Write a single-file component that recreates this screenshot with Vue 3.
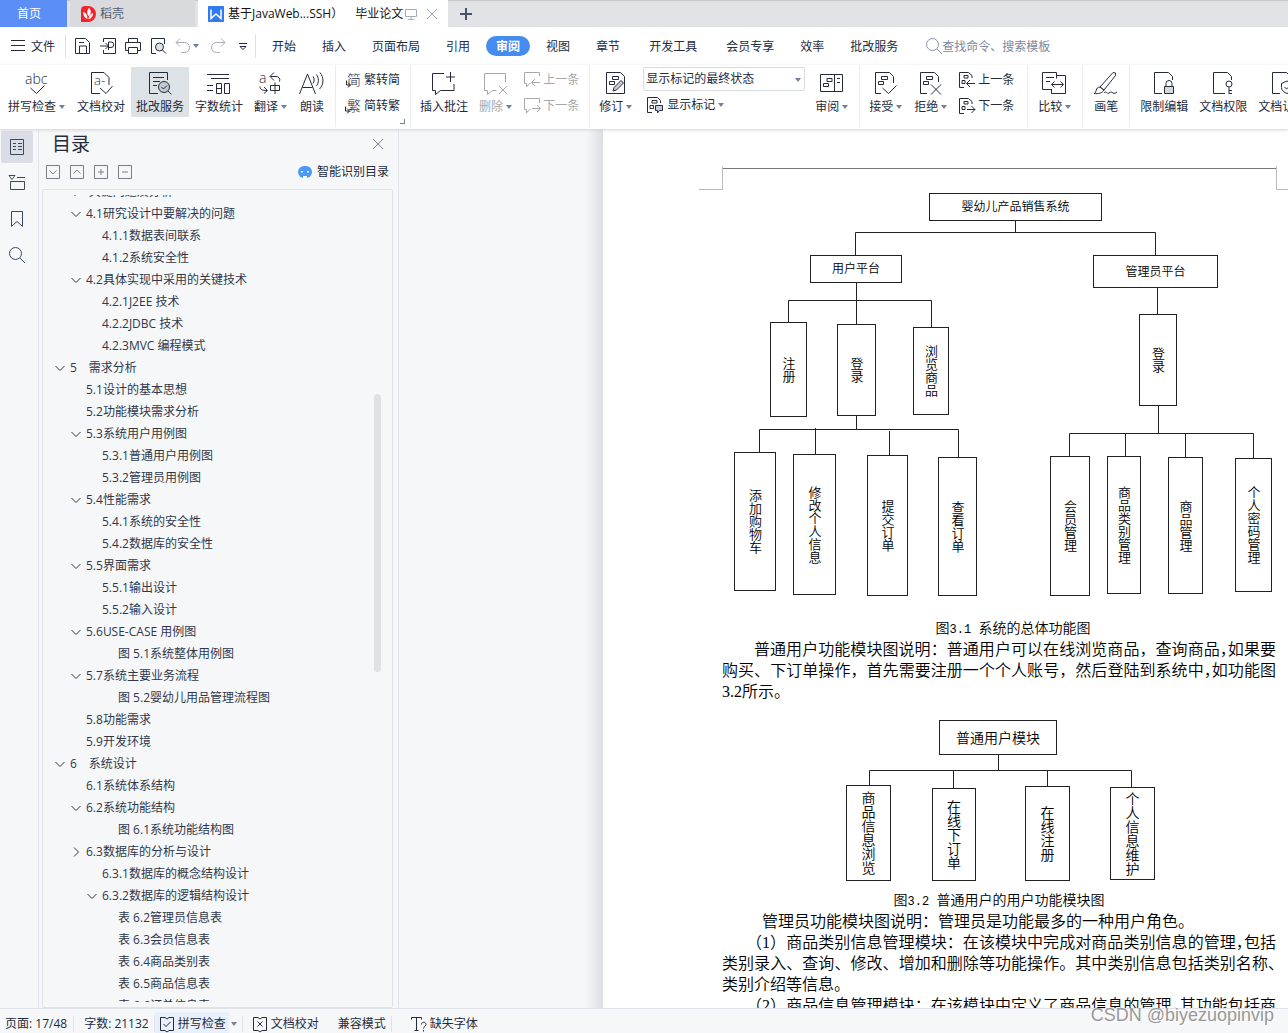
<script setup>
import { ref } from 'vue'

const icons = {
  menu: '<path d="M4 6.5h14M4 11.5h14M4 16.5h14"/>',
  save: '<path d="M4.5 19.5v-15h10l4 4v11zM8.5 19v-7h7v7M8 8.5h5"/>',
  pdf: '<path d="M7.5 8V4.5h12v15h-12V16M4 12h8M9.500 9l3 3-3 3M12.500 16V8h2.500a2.500 2.500 0 0 1 0 5.500h-2.500"/>',
  print: '<path d="M7.500 8.500v-4h9v4M7.500 16.500h-3v-8h15v8h-3M7.500 13.500h9v6h-9z"/>',
  preview: '<path d="M10 19.500H5.500v-15h13V10"/><circle cx="13.500" cy="13" r="4" fill="#dfe3e8"/><path d="M16.500 16l3.500 3.500"/>',
  undo: '<path d="M9 4.500l-4 4 4 4M5 8.500h8.500a5 5 0 0 1 0 10H10"/>',
  redo: '<path d="M15 4.500l4 4-4 4M19 8.500h-8.500a5 5 0 0 0 0 10H14"/>',
  more: '<path d="M8 9.500h8M9 12.500l3 3 3-3z"/>',
  search: '<circle cx="10.500" cy="10.500" r="6"/><path d="M15 15l5 5"/>',
  spell: '<text x="1" y="13" font-size="14">abc</text><path d="M6.500 17l6 5.500 8-8"/>',
  proof: '<path d="M12 22.500H3.500v-21H16l5 5V14M12 17l6 5.500 6.500-7.500"/><text x="6" y="14" font-size="13">a-</text>',
  service: '<path d="M11 22.500H2.500v-21h18V9M6 6.500h11M6 10.500h7M6 14.500h4"/><circle cx="17" cy="16" r="5.500" fill="#c3cad2"/><path d="M14.500 16l2 2 3.500-3.500M21 20l3.500 3.500"/>',
  count: '<path d="M1 3.500h22M5 7.500h18M1 14.500h6M1 19.500h6M10.500 12.500h5v10h-5zM10.500 17.500h5M18.500 12.500h5v10h-5z"/>',
  translate: '<text x="1" y="12" font-size="14">a</text><path d="M16 1.500l-4 4 4 4M12.500 5.500H18a3.500 3.500 0 0 1 3.500 5M2 15.500c0 3 2 4 7 4M6 16l3.500 3.500-3.500 3M12.500 14.500h9v5h-9zM17 11.500v11.500"/>',
  read: '<path d="M.5 23L8.500 3l8 20M3.500 16.500h10M14 5.500c1.500 2 1.500 5 0 7M17.500 3.500c2.500 3.500 2.500 8 0 11.500M21 1.500c4 5 4 12-.5 16.500"/>',
  simp: '<text x="6" y="17" font-size="14">简</text><path d="M5.500 12.500v4.500h4M7 14.500l2.500 2.500L7 19.500"/>',
  trad: '<text x="6" y="17" font-size="14">繁</text><path d="M4.500 12.500v4.500h3.500M6 14.500l2.500 2.500L6 19.500"/>',
  comment: '<path d="M13 2.500H1.500v17h3v4l5-4h13.500V13M19.500 1v10M15 6h9"/>',
  commentDel: '<path d="M22.500 11V2.500h-21v17h3v4l5-4h4M16 15l8 8M24 15l-8 8"/>',
  commentPrev: '<path d="M19.500 8V4.500h-15v11h2V19l3-3.500h1M20 14.500h-8M15 11l-3.500 3.500L15 18"/>',
  commentNext: '<path d="M19.500 9V4.500h-15v11h2V19l3-3.500h1M12 14.500h8M17 11l3.500 3.500L17 18"/>',
  revise: '<path d="M3.500 1.500h14l4 4v17h-18zM9.500 5.500h6v3h-6zM6.500 10.500h5v3h-5z"/><path d="M10 20l1-3.500 7-7 2.500 2.500-7 7z" fill="#c9ced6"/>',
  marks: '<path d="M9 19.500H4.500v-15h10l3 3V10M9 7.500h5v2.500H9zM7 12.500h3.500v3H7z"/><path d="M12.500 12.500h7v5h-3l-2 2.500v-2.500h-2z" fill="#c9ced6"/>',
  review: '<path d="M1.500 3.500h22v17h-22zM15.500 3.500v17M8 7.500h5v3H8zM4.500 12.500h5v3h-5zM18 7.500h3M18 11.500h3"/>',
  accept: '<path d="M8 22.500H2.500v-21h14l4 4V12M8.500 5.500h6v3h-6zM5.500 10.500h5v3h-5zM9.500 17l6 5.500 8-8"/>',
  reject: '<path d="M9 22.500H2.500v-21h14l4 4V11M8.500 5.500h6v3h-6zM5.500 10.500h5v3h-5zM13 13.500l10 10M23 13.500l-10 10"/>',
  revPrev: '<path d="M9 19.500H4.500v-15h9l3.500 3V10M9 7.500h4v2.500H9zM7 12.500h3v3H7zM20 15.500h-8M15 12l-3.500 3.500L15 19"/>',
  revNext: '<path d="M9 19.500H4.500v-15h9l3.500 3V10M9 7.500h4v2.500H9zM7 12.500h3v3H7zM12 15.500h8M16.500 12l3.500 3.500-3.500 3.500"/>',
  compare: '<path d="M10 18.500H.5v-17h14v6M4 6.500h8M4 10.500h4M14 4.500h9.500v18h-14v-4M10 13.500h11M12.500 10.500l-3 3 3 3M18.500 10.500l3 3-3 3"/>',
  brush: '<path d="M7 16L20 1.500l2.500.5v2.500L11 19zM7 16c-5 0-3 6-6 6.500 4 .5 9-.5 10-3.500zM11 22c2-3 3 1.500 5 0s2.500-1 4 0 2.500 0 4-1"/>',
  lock: '<path d="M11 22.500H3.500v-21h14l4 4V9M15 15v-2.500a3 3 0 0 1 6 0V15"/><path d="M13.500 15.500h9v7h-9z" fill="#d5d9de"/>',
  key: '<path d="M15 22.500H3.500v-21h14l4 4V9"/><circle cx="19" cy="13" r="3"/><path d="M19 16v7M19 19.500h3M19 22.500h3"/>',
  shield: '<path d="M11 22.500H3.500v-21h14l4 4V9M18 10l5.500 2.500v4c0 3-3 5-5.500 6-2.500-1-5.500-3-5.500-6v-4zM15.500 16l2 2 3.500-3"/>',
  outline: '<path d="M5.500 4.500h13v15h-13zM8 8.500h3M8 11.500h3M8 14.500h3M13 8.500h4M13 11.500h4M13 14.500h4"/>',
  chapter: '<path d="M4 4.500h6l-3 4zM12 6.500h8M5.500 10.500v8h14v-8H5.500"/>',
  bookmark: '<path d="M6.500 4.500h11v15l-5.500-5-5.500 5z"/>',
  close: '<path d="M7 7l10 10M17 7L7 17"/>',
  plus: '<path d="M12 6v12M6 12h12" stroke-width="2"/>',
  screen: '<path d="M6.500 7.500h11v7h-11zM12 14.500v3M9 17.500h6"/>',
  expand: '<path d="M5.500 5.500h13v13h-13zM8.500 10.500l3.500 3.500 3.500-3.500"/>',
  collapse: '<path d="M5.500 5.500h13v13h-13zM8.500 13.500l3.500-3.500 3.500 3.500"/>',
  add: '<path d="M5.500 5.500h13v13h-13zM12 9v6M9 12h6"/>',
  minus: '<path d="M5.500 5.500h13v13h-13zM9 12h6"/>',
  bookCheck: '<path d="M10 5.500H5.500v13H10l2 1.500 2-1.500h4.500v-13H14L12 7zM8.500 12l2.500 2.500 4.500-4.500"/>',
  bookCross: '<path d="M10 5.500H5.500v13H10l2 1.500 2-1.500h4.500v-13H14L12 7zM9.500 9.500l5 5M14.500 9.500l-5 5"/>',
  missing: '<path d="M4.500 7.500v-2h10v2M9.500 5.500v13M7.500 18.500h4M14.500 12.500c0-3 4.500-3 4.500 0 0 2-2.500 2-2.500 4M16.500 18v1.500"/>',
  down: '<path d="M7.500 10l4.500 4.500 4.500-4.500"/>',
  right: '<path d="M10 7.500l4.500 4.500-4.500 4.500"/>'
}

const quick = [
  ['save', '保存'], ['pdf', '输出为PDF'], ['print', '打印'], ['preview', '打印预览']
]
const menus = [
  ['开始'], ['插入'], ['页面布局'], ['引用'], ['审阅', 'active'], ['视图'], ['章节'],
  ['开发工具', 'wide'], ['会员专享', 'wide'], ['效率'], ['批改服务']
]
const groups = [
  { tools: [
    { i: 'spell', t: '拼写检查', c: 1 }, { i: 'proof', t: '文档校对' }, { i: 'service', t: '批改服务', on: 1 },
    { i: 'count', t: '字数统计' }, { i: 'translate', t: '翻译', c: 1 }, { i: 'read', t: '朗读' }
  ] },
  { tools: [{ pair: [['simp', '繁转简'], ['trad', '简转繁']], launcher: 1 }] },
  { tools: [
    { i: 'comment', t: '插入批注' }, { i: 'commentDel', t: '删除', c: 1, off: 1 },
    { pair: [['commentPrev', '上一条'], ['commentNext', '下一条']], off: 1 }
  ] },
  { tools: [{ i: 'revise', t: '修订', c: 1 }, { select: 1 }, { i: 'review', t: '审阅', c: 1 }] },
  { roomy: 1, tools: [
    { i: 'accept', t: '接受', c: 1 }, { i: 'reject', t: '拒绝', c: 1 },
    { pair: [['revPrev', '上一条'], ['revNext', '下一条']] }
  ] },
  { tools: [{ i: 'compare', t: '比较', c: 1 }] },
  { tools: [{ i: 'brush', t: '画笔' }] },
  { tools: [{ i: 'lock', t: '限制编辑' }, { i: 'key', t: '文档权限' }, { i: 'shield', t: '文档认证' }] }
]
const tree = [
  [0, '4\u3000关键问题及分析', 'down'], [1, '4.1研究设计中要解决的问题', 'down'], [2, '4.1.1数据表间联系'], [2, '4.1.2系统安全性'],
  [1, '4.2具体实现中采用的关键技术', 'down'], [2, '4.2.1J2EE 技术'], [2, '4.2.2JDBC 技术'], [2, '4.2.3MVC 编程模式'],
  [0, '5\u3000需求分析', 'down'], [1, '5.1设计的基本思想'], [1, '5.2功能模块需求分析'],
  [1, '5.3系统用户用例图', 'down'], [2, '5.3.1普通用户用例图'], [2, '5.3.2管理员用例图'],
  [1, '5.4性能需求', 'down'], [2, '5.4.1系统的安全性'], [2, '5.4.2数据库的安全性'],
  [1, '5.5界面需求', 'down'], [2, '5.5.1输出设计'], [2, '5.5.2输入设计'],
  [1, '5.6USE-CASE 用例图', 'down'], [3, '图 5.1系统整体用例图'],
  [1, '5.7系统主要业务流程', 'down'], [3, '图 5.2婴幼儿用品管理流程图'],
  [1, '5.8功能需求'], [1, '5.9开发环境'], [0, '6\u3000系统设计', 'down'], [1, '6.1系统体系结构'],
  [1, '6.2系统功能结构', 'down'], [3, '图 6.1系统功能结构图'], [1, '6.3数据库的分析与设计', 'right'],
  [2, '6.3.1数据库的概念结构设计'], [2, '6.3.2数据库的逻辑结构设计', 'down'],
  [3, '表 6.2管理员信息表'], [3, '表 6.3会员信息表'], [3, '表 6.4商品类别表'], [3, '表 6.5商品信息表'], [3, '表 6.6订单信息表']
]

// Diagram nodes: x, y, width, height, label, vertical
const systemNodes = [
  [207, 3, 173, 28, '婴幼儿产品销售系统'], [88, 65, 92, 28, '用户平台'], [371, 65, 125, 33, '管理员平台'],
  [48, 132, 37, 95, '注册', 1], [115, 134, 39, 92, '登录', 1], [191, 137, 36, 88, '浏览商品', 1],
  [417, 124, 38, 92, '登录', 1],
  [12, 262, 42, 139, '添加购物车', 1], [71, 264, 43, 141, '修改个人信息', 1], [145, 265, 41, 141, '提交订单', 1], [216, 267, 39, 139, '查看订单', 1],
  [328, 266, 40, 140, '会员管理', 1], [385, 266, 34, 138, '商品类别管理', 1], [446, 267, 35, 137, '商品管理', 1], [513, 268, 37, 134, '个人密码管理', 1]
]
const systemLines = 'M293.500 31V42.500M133.500 65V42.500H433.500V65M134.500 93V134M66.500 132V110.500H209.500V137M435.500 98V124M134.500 226V239.500M37.500 262V239.500H236.500V267M93.500 238V264M167.500 241V265M436.500 216V243.500M347.500 266V243.500H531.500V268M403.500 243V266M463.500 243V267'
const userNodes = [
  [217, 18, 118, 35, '普通用户模块'], [124, 83, 45, 96, '商品信息浏览', 1], [210, 86, 44, 93, '在线下订单', 1],
  [303, 84, 45, 95, '在线注册', 1], [388, 85, 45, 93, '个人信息维护', 1]
]
const userLines = 'M276.500 53V68.500M147.500 83V68.500H409.500V85M231.500 68V86M325.500 68V84'
const box = n => ({ left: n[0] + 'px', top: n[1] + 'px', width: n[2] + 'px', height: n[3] + 'px' })
const markup = ref('显示标记的最终状态')
const query = ref('')
</script>

<template>
  <div class="app">
    <header class="tabs">
      <button class="home">首页</button>
      <button class="tab docer">
        <svg class="logo" viewBox="0 0 16 16"><path d="M1 4a4 4 0 0 1 4-4h3a8 8 0 0 1 0 16H1z" fill="#f5222d"/><path d="M9 2c3 3 2 6-.5 8C6.500 7 7 4 9 2zM3 6c3 .5 4.500 3 4.500 7C4.500 12 3 9 3 6zM13 7c0 3-1.500 5.500-4.500 6.500C8.500 10 10 8 13 7z" fill="#fff"/></svg>
        稻壳
      </button>
      <div class="tab current">
        <svg class="logo" viewBox="0 0 16 16"><rect width="16" height="16" rx="1" fill="#2f7bee"/><path d="M3 3.500v9l5-4.500 5 4.500v-9" fill="none" stroke="#fff" stroke-width="1.500"/></svg>
        <span class="title">基于JavaWeb...SSH）&emsp;毕业论文</span>
        <svg class="ic soft" viewBox="0 0 24 24" v-html="icons.screen"></svg>
        <button aria-label="关闭标签"><svg class="ic soft" viewBox="0 0 24 24" v-html="icons.close"></svg></button>
      </div>
      <button class="new" aria-label="新建标签"><svg class="ic" viewBox="0 0 24 24" v-html="icons.plus"></svg></button>
    </header>

    <nav class="menubar">
      <button class="file"><svg class="ic" viewBox="0 0 24 24" v-html="icons.menu"></svg><span>文件</span></button>
      <div class="quick">
        <button v-for="q in quick" :key="q[0]" :aria-label="q[1]"><svg class="ic" viewBox="0 0 24 24" v-html="icons[q[0]]"></svg></button>
        <button class="faded undo" aria-label="撤销"><svg class="ic" viewBox="0 0 24 24" v-html="icons.undo"></svg><i class="caret"></i></button>
        <button class="faded" aria-label="恢复"><svg class="ic" viewBox="0 0 24 24" v-html="icons.redo"></svg></button>
        <button aria-label="更多"><svg class="ic" viewBox="0 0 24 24" v-html="icons.more"></svg></button>
      </div>
      <button v-for="m in menus" :key="m[0]" class="menu" :class="m[1]"><span>{{ m[0] }}</span></button>
      <label class="find">
        <svg class="ic" viewBox="0 0 24 24" v-html="icons.search"></svg>
        <input v-model="query" placeholder="查找命令、搜索模板" aria-label="查找命令、搜索模板">
      </label>
    </nav>

    <div class="ribbon">
      <div v-for="(g, gi) in groups" :key="gi" class="group" :class="{ roomy: g.roomy }">
        <template v-for="(b, bi) in g.tools" :key="bi">
          <div v-if="b.pair" class="pair" :class="{ off: b.off }">
            <button v-for="p in b.pair" :key="p[0]" :disabled="!!b.off"><svg class="ic" viewBox="0 0 24 24" v-html="icons[p[0]]"></svg>{{ p[1] }}</button>
            <i v-if="b.launcher" class="launcher"></i>
          </div>
          <div v-else-if="b.select" class="markup">
            <div class="picker">
              <select v-model="markup" aria-label="标记显示方式"><option>显示标记的最终状态</option><option>最终状态</option></select>
              <i class="caret"></i>
            </div>
            <button><svg class="ic" viewBox="0 0 24 24" v-html="icons.marks"></svg>显示标记<i class="caret"></i></button>
          </div>
          <button v-else class="tool" :class="{ on: b.on, off: b.off }" :disabled="!!b.off">
            <svg class="big" viewBox="0 0 24 24" v-html="icons[b.i]"></svg>
            <span class="label">{{ b.t }}<i v-if="b.c" class="caret"></i></span>
          </button>
        </template>
      </div>
    </div>

    <main class="work">
      <aside class="rail">
        <button class="on" aria-label="目录"><svg class="ic" viewBox="0 0 24 24" v-html="icons.outline"></svg></button>
        <button aria-label="章节"><svg class="ic" viewBox="0 0 24 24" v-html="icons.chapter"></svg></button>
        <button aria-label="书签"><svg class="ic" viewBox="0 0 24 24" v-html="icons.bookmark"></svg></button>
        <button aria-label="查找"><svg class="ic" viewBox="0 0 24 24" v-html="icons.search"></svg></button>
      </aside>

      <section class="panel">
        <div class="panel-head">
          <h2>目录</h2>
          <button aria-label="关闭目录"><svg class="ic" viewBox="0 0 24 24" v-html="icons.close"></svg></button>
        </div>
        <div class="panel-tools">
          <button v-for="k in ['expand', 'collapse', 'add', 'minus']" :key="k" :aria-label="k"><svg class="ic" viewBox="0 0 24 24" v-html="icons[k]"></svg></button>
          <button class="smart">
            <svg viewBox="0 0 14 12"><rect width="14" height="12" rx="6" fill="#4a9af5"/><path d="M3 6.500V5h2v1.500M9 6.500V5h2v1.500M5 12v-2h4v2" fill="#f6f7f9"/></svg>
            智能识别目录
          </button>
        </div>
        <div class="tree-box">
          <div class="clip">
            <ul class="tree">
              <li v-for="r in tree" :key="r[1]" :style="{ paddingLeft: 10 + r[0] * 16 + 'px' }">
                <span class="fold"><svg v-if="r[2]" viewBox="0 0 24 24" v-html="icons[r[2]]"></svg></span>
                <a href="#">{{ r[1] }}</a>
              </li>
            </ul>
          </div>
          <div class="thumb"></div>
        </div>
      </section>

      <section class="canvas">
        <article class="page">
          <div class="margin-top"><i class="crop left"></i><i class="crop right"></i></div>
          <figure class="fig-system">
            <svg class="wires"><path :d="systemLines"/></svg>
            <div v-for="(n, i) in systemNodes" :key="i" class="node" :class="{ vertical: n[5] }" :style="box(n)">{{ n[4] }}</div>
          </figure>
          <p class="caption shifted">图<span>3.1 </span>系统的总体功能图</p>
          <p class="line full indent">普通用户功能模块图说明：普通用户可以在线浏览商品，查询商品<span class="half">，</span>如果要</p>
          <p class="line full">购买、下订单操作，首先需要注册一个个人账号，然后登陆到系统中<span class="half">，</span>如功能图</p>
          <p class="line">3.2所示。</p>
          <figure class="fig-user">
            <svg class="wires"><path :d="userLines"/></svg>
            <div v-for="(n, i) in userNodes" :key="i" class="node" :class="{ vertical: n[5] }" :style="box(n)">{{ n[4] }}</div>
          </figure>
          <p class="caption">图<span>3.2 </span>普通用户的用户功能模块图</p>
          <p class="line lead">管理员功能模块图说明：管理员是功能最多的一种用户角色。</p>
          <p class="line full indent"><span class="half">（</span>1）商品类别信息管理模块：在该模块中完成对商品类别信息的管理<span class="half">，</span>包括</p>
          <p class="line full">类别录入、查询、修改、增加和删除等功能操作。其中类别信息包括类别名称<span class="half">、</span></p>
          <p class="line">类别介绍等信息。</p>
          <p class="line full indent"><span class="half">（</span>2）商品信息管理模块：在该模块中定义了商品信息的管理<span class="half">，</span>其功能包括商</p>
        </article>
      </section>
    </main>

    <footer class="status">
      <span class="cell page-no">页面: 17/48</span>
      <span class="cell words">字数: 21132</span>
      <span class="cell spelling"><button><svg class="ic" viewBox="0 0 24 24" v-html="icons.bookCheck"></svg>拼写检查</button><i class="caret"></i></span>
      <button class="check"><svg class="ic" viewBox="0 0 24 24" v-html="icons.bookCross"></svg>文档校对</button>
      <span class="cell mode">兼容模式</span>
      <button class="check font"><svg class="ic" viewBox="0 0 24 24" v-html="icons.missing"></svg>缺失字体</button>
      <span class="watermark">CSDN @biyezuopinvip</span>
    </footer>
  </div>
</template>

<style>
body { margin: 0; }
</style>

<style scoped>
* { box-sizing: border-box; }
.app {
  height: 100vh; display: flex; flex-direction: column; overflow: hidden;
  font: 12px/18px "Open Sans", "Noto Sans CJK SC", sans-serif; color: #252b3d; background: #fff; white-space: nowrap;
}
button { font: inherit; color: inherit; background: none; border: 0; padding: 0; margin: 0; display: flex; align-items: center; flex: none; }
p, h2, ul, figure { margin: 0; padding: 0; }
.ic, .big, .fold svg { width: 24px; height: 24px; flex: none; fill: none; stroke: currentColor; overflow: visible; }
svg :deep(text) { fill: currentColor; stroke: none; font-weight: 300; }
.caret { flex: none; width: 0; height: 0; border: 3px solid transparent; border-top: 4px solid #72809a; border-bottom: 0; }

.tabs { flex: none; height: 27px; display: flex; background: #e2e3e7; box-shadow: inset 0 2px 1px -1px #c6c7ca; }
.home { width: 67px; justify-content: center; padding-right: 9px; color: #fff; background: #5c8ef8; }
.tab { display: flex; align-items: center; margin-left: 3px; }
.docer { width: 125px; padding-left: 10px; gap: 4px; color: #555d70; background: #d9dadd; }
.logo { width: 16px; height: 16px; flex: none; }
.current { width: 250px; padding-left: 10px; background: #fff; color: #111; }
.title { width: 171px; margin-left: 4px; }
.soft { color: #a3abbd; margin-right: -3px; }
.new { margin-left: 6px; color: #46536b; }

.menubar { flex: none; height: 38px; display: flex; align-items: center; }
.file { padding-left: 7px; height: 24px; padding-right: 10px; border-right: 1px solid #dfe1e5; }
.quick { display: flex; width: 190px; height: 24px; padding-left: 5px; border-right: 1px solid #dfe1e5; }
.quick > * { width: 25px; }
.quick .faded { color: #a8acb5; }
.quick .undo { width: 35px; }
.quick .faded .caret { margin-left: -2px; }
.file + .quick + .menu { margin-left: 3px; }
.menu { height: 20px; padding: 0 13px; }
.menu span, .file span { padding-top: 2px; }
.menu.wide { padding-left: 16px; }
.menu.active { padding: 0 3px; color: #fff; font-weight: 700; }
.menu.active span { padding: 2px 10px 0; background: #448cf0; border-radius: 10px; }
.find { display: flex; align-items: center; flex: 1; min-width: 0; margin-left: 11px; color: #8793ab; }
.find .ic { margin-right: -4px; }
.find input { flex: 1; min-width: 0; border: 0; padding: 2px 0 0; background: none; font: inherit; outline: 0; }
.find input::placeholder { color: #7d889f; opacity: 1; }

.ribbon { flex: none; height: 64px; display: flex; position: relative; z-index: 1; background: #fff; box-shadow: 0 1px 3px #cfd1d5; }
.group { display: flex; gap: 1px; padding: 0 5px 0 4px; border-right: 1px solid #ebecee; height: 62px; flex: none; }
.group:first-child { padding-left: 3px; }
.group:last-child { border: 0; }
.group.roomy { padding-right: 8px; }
.roomy ~ .group { padding-left: 5px; }
.tool { flex-direction: column; height: 50px; padding: 4px 5px 0; margin-top: 2px; }
.tool .big { margin-right: 2px; }
.tool.on { background: #dde2e7; }
.label { display: flex; align-items: center; margin-top: 3px; }
.label .caret { margin: 0 1px 0 3px; }
.off { color: #a8a8a8; }
.tool:disabled, .pair button:disabled { color: #a8a8a8; }
.pair { position: relative; display: flex; flex-direction: column; gap: 2px; padding: 3px 5px 0 1px; }
.pair .ic { margin-right: -1px; }
.launcher { position: absolute; right: 0; bottom: 3px; width: 5px; height: 5px; border: solid #72809a; border-width: 0 1px 1px 0; }
.markup { display: flex; flex-direction: column; gap: 2px; padding: 2px 4px 0; }
.picker { position: relative; width: 162px; height: 24px; }
.picker select { width: 100%; height: 24px; padding: 0 2px; border: 1px solid #d8dbe1; border-radius: 2px; background: #fff; color: inherit; font: inherit; appearance: none; }
.picker .caret { position: absolute; right: 4px; top: 11px; }
.markup button .caret { margin-left: 3px; }

.work { flex: 1; min-height: 0; display: flex; background: #f6f7f9; }
.rail { width: 39px; flex: none; padding: 2px 1px; border-right: 1px solid #dfe2e8; display: flex; flex-direction: column; gap: 4px; color: #3d485f; }
.rail button { width: 32px; height: 32px; justify-content: center; border-radius: 2px; }
.rail .on { background: #dadde5; }
.panel { width: 360px; flex: none; display: flex; flex-direction: column; border-right: 1px solid #dfe2e8; padding: 0 5px 0 3px; }
.panel-head { display: flex; justify-content: space-between; height: 30px; align-items: center; padding: 0 3px 0 10px; }
.panel-head h2 { font-size: 19px; line-height: 24px; font-weight: 400; }
.panel-head .ic { color: #7b859d; }
.panel-tools { display: flex; align-items: center; height: 26px; margin-left: -1px; color: #7b8088; }
.panel-tools .smart { margin-left: auto; gap: 5px; color: #252b3d; padding-right: 4px; }
.smart svg { width: 14px; height: 12px; }
.tree-box { flex: 1; min-height: 0; margin-top: 4px; padding: 5px 0; border: 1px solid #dfe2e8; border-radius: 2px; position: relative; display: flex; }
.clip { flex: 1; overflow: hidden; }
.tree { margin-top: -14px; list-style: none; color: #2f3749; }
.tree li { display: flex; align-items: center; height: 22px; }
.fold { width: 17px; height: 22px; flex: none; display: flex; justify-content: center; align-items: center; padding-right: 4px; }
.tree a { color: inherit; text-decoration: none; }
.thumb { position: absolute; right: 11px; top: 25%; width: 7px; height: 34%; border-radius: 4px; background: #dfe2e5; }

.canvas { flex: 1; min-width: 0; overflow: hidden; padding-left: 187px; display: flex; }
.canvas::before { content: ""; flex: none; width: 17px; background: linear-gradient(90deg, #f6f7f9, #dcdee1); }
.page { flex: 1; min-width: 686px; padding-left: 119px; background: #fff; color: #000; font-family: "Liberation Serif", "Noto Sans CJK SC", serif; font-weight: 350; }
.margin-top { position: relative; height: 61px; width: 554px; }
.margin-top::before { content: ""; position: absolute; left: 0; right: 0; top: 39px; height: 1px; background: #777; }
.crop { position: absolute; top: 37px; width: 24px; height: 24px; border-bottom: 1px solid #bbb; }
.crop.left { left: -23px; border-right: 1px solid #bbb; }
.crop.right { right: -24px; border-left: 1px solid #bbb; }
figure { position: relative; width: 554px; font-family: "Noto Sans CJK SC", sans-serif; font-size: 12px; }
.fig-system { height: 429px; }
.fig-user { height: 189px; font-size: 14px; }
.wires { position: absolute; inset: 0; width: 100%; height: 100%; fill: none; stroke: #222; }
.node { position: absolute; border: 1px solid #222; background: #fff; display: flex; align-items: center; justify-content: center; padding-bottom: 2px; }
.vertical { writing-mode: vertical-rl; font-size: 13px; padding-bottom: 0; }
.fig-user .vertical { font-size: 14px; }
.caption { width: 554px; height: 20px; font-size: 14px; line-height: 20px; text-align: center; white-space: pre; }
.caption span { font: 12px "Liberation Mono", monospace; }
.shifted { padding-left: 28px; }
.line { width: 554px; height: 21px; font-size: 16px; line-height: 21px; }
.full { text-align: justify; text-align-last: justify; }
.half { font-feature-settings: "halt"; }
.indent { padding-left: 32px; }
.lead { padding-left: 40px; }

.status { flex: none; height: 25px; display: flex; align-items: center; position: relative; z-index: 2; background: #f6f7f9; border-top: 1px solid #dfe2e8; padding-top: 6px; }
.cell { display: flex; align-items: center; height: 16px; border-right: 1px solid #dfe2e8; }
.page-no { padding: 0 6px 0 5px; }
.words { padding: 0 5px 0 10px; }
.spelling button { height: 24px; padding-right: 3px; background: #e7f0fb; }
.spelling .ic { margin-right: -1px; }
.spelling .caret { margin: 0 5px 0 2px; }
.check { margin-left: 5px; }
.check .ic { margin: 0 -1px 0 0; }
.mode { margin-left: 19px; padding-right: 5px; }
.font { margin-left: 15px; }
.watermark { position: absolute; right: 14px; bottom: 6px; font: 18px/24px "Liberation Sans", sans-serif; color: #999; text-shadow: 1px 1px 0 #fff; }
</style>
